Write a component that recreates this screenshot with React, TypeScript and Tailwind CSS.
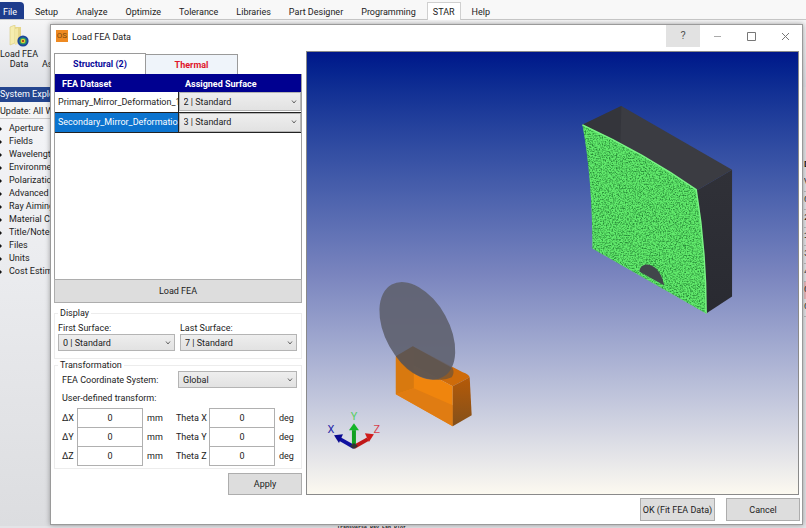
import { useState } from "react";
import type { ReactNode } from "react";

const menuItems = ["Setup", "Analyze", "Optimize", "Tolerance", "Libraries", "Part Designer", "Programming", "STAR", "Help"];

const explorerItems = [
  "Aperture",
  "Fields",
  "Wavelengths",
  "Environment",
  "Polarization",
  "Advanced",
  "Ray Aiming",
  "Material Catalogs",
  "Title/Notes",
  "Files",
  "Units",
  "Cost Estimator",
];

const surfaces = [0, 1, 2, 3, 4, 5, 6, 7].map((n) => `${n} | Standard`);

const datasets = [
  { name: "Primary_Mirror_Deformation_1", surface: "2 | Standard" },
  { name: "Secondary_Mirror_Deformation_1", surface: "3 | Standard" },
];

function Dropdown({ id, label, value, options, className }: { id?: string; label?: string; value: string; options: string[]; className: string }) {
  return (
    <div className={`grid items-center ${className}`}>
      <select
        id={id}
        aria-label={label}
        defaultValue={value}
        className="col-start-1 row-start-1 h-full w-full appearance-none border border-[#b4b4b4] bg-linear-to-b from-[#eeeeee] to-[#e2e2e2] px-1 text-[#222]"
      >
        {options.map((o) => (
          <option key={o}>{o}</option>
        ))}
      </select>
      <svg viewBox="0 0 6 4" className="pointer-events-none col-start-1 row-start-1 mr-1 h-1 w-1.5 justify-self-end" fill="none" stroke="#666">
        <path d="M1 .5 3 3 5 .5" />
      </svg>
    </div>
  );
}

function PushButton({ children, className }: { children: ReactNode; className: string }) {
  return <button className={`border border-[#adadad] bg-[#dddddd] text-center text-[#222] ${className}`}>{children}</button>;
}

function Offset({ axis, id, unit, className }: { axis: string; id: string; unit: string; className: string }) {
  return (
    <div className="flex items-center">
      <label htmlFor={id} className={className}>{axis}</label>
      <input id={id} defaultValue="0" className="-mb-px h-5 w-[66px] border border-[#b0b0b0] bg-white text-center" />
      <span className="ml-1 w-4">{unit}</span>
    </div>
  );
}

function FolderIcon() {
  return (
    <svg viewBox="0 0 20 22" className="h-[22px] w-5">
      <path d="M1 2 6 0v18l-5 2z" fill="#f6edb0" stroke="#d8ca7a" strokeWidth=".6" />
      <path d="M6 2h6v16H6z" fill="#e6d68a" />
      <path d="m6 4 3-1v16l-3 1z" fill="#f3e8a6" />
      <circle cx="14" cy="16" r="5.6" fill="#1c479c" />
      <circle cx="14" cy="16" r="3.6" fill="#2f9d63" />
      <circle cx="14" cy="16" r="2.3" fill="#e5ce3a" />
      <circle cx="14" cy="16" r="1.1" fill="#a0331f" />
    </svg>
  );
}

function Viewport() {
  return (
    <svg viewBox="307 52 492 443" className="h-full w-full" role="img" aria-label="3D layout">
      <defs>
        <filter id="mesh" x="0" y="0" width="100%" height="100%" colorInterpolationFilters="sRGB">
          <feTurbulence type="fractalNoise" baseFrequency="0.7" numOctaves="3" seed="4" />
          <feColorMatrix values="0 0 0 0 0.16  0 0 0 0 0.55  0 0 0 0 0.22  0 2.6 0 0 -1.05" />
          <feComposite in2="SourceGraphic" operator="in" result="grain" />
          <feMerge>
            <feMergeNode in="SourceGraphic" />
            <feMergeNode in="grain" />
          </feMerge>
        </filter>
        <linearGradient id="side" x1="0" y1="0" x2="0" y2="1">
          <stop offset="0" stopColor="#303138" />
          <stop offset="1" stopColor="#292a31" />
        </linearGradient>
        <linearGradient id="orangeSide" x1="0" y1="0" x2="0" y2="1">
          <stop offset="0" stopColor="#b55a08" />
          <stop offset="1" stopColor="#84501a" />
        </linearGradient>
      </defs>

      {/* primary mirror */}
      <path d="M583 125 622 106 733 170 697 191z" fill="#3b3c42" />
      <path d="m622 106-1 40-38-21z" fill="#34353b" />
      <path d="m697 191 36-21v127l-26 17z" fill="url(#side)" />
      <path d="M583 125Q646 154 697 190Q707 250 707 314L593 249Q593 180 583 125" fill="#62ea6c" filter="url(#mesh)" />
      <path d="M583 125Q646 154 697 190Q707 250 707 314" fill="none" stroke="#7af584" strokeWidth="1.5" />
      <path d="M640 272c1-11 20-11 25 14z" fill="#41464b" />

      {/* secondary mirror */}
      <path d="m396 357 17-10 50 26q6 2 7 5l-17 9z" fill="#ce6b0a" />
      <path d="m396 357 57 30v40l-57-32z" fill="#f0850d" />
      <path d="m396 357 18-9v41l-18 6z" fill="#d8790f" />
      <path d="m396 395 18-6 39 17v21z" fill="#e07c12" />
      <path d="m453 387 17-9 2 38-19 11z" fill="url(#orangeSide)" />
      <ellipse cx="417.5" cy="331.5" rx="53" ry="32" transform="rotate(61 417.5 331.5)" fill="#5f6270" fillOpacity=".92" />
      <path d="m396 357 17-10 40 22q2 5-1 9-12 6-32-1-13-4-24-20" fill="#5e4f40" fillOpacity=".6" />

      {/* axis triad */}
      <g strokeWidth="4">
        <path d="m354 448-14-8" stroke="#1010a0" />
        <path d="m354 448 14-8" stroke="#c01818" />
        <path d="M354 448v-17" stroke="#12a022" />
      </g>
      <path d="m334 436 9-1-4 9z" fill="#0a0a90" />
      <path d="m374 435-9-1 4 9z" fill="#d01c1c" />
      <path d="m354 424-5 7h10z" fill="#14b428" />
      <path d="m350 447 4 3 4-3-4-3z" fill="#333" />
      <g className="text-[11px]" textAnchor="middle">
        <text x="331" y="434" fill="#2a2aa8">X</text>
        <text x="354" y="421" fill="#56cf62">Y</text>
        <text x="377" y="434" fill="#d8404c">Z</text>
      </g>
    </svg>
  );
}

export default function App() {
  const [selected, setSelected] = useState(1);

  return (
    <div className="relative flex h-screen flex-col overflow-hidden bg-[#e3e4e7] font-[Roboto,'Noto_Sans',sans-serif] text-[9px] leading-3 text-[#222]">
      <nav className="flex h-5 shrink-0 items-end border-b border-[#c8c8c8] bg-[#f8f8f8] whitespace-nowrap">
        <button className="mr-0.5 h-[17px] w-6 rounded-tr-sm bg-[#1e3c8c] pt-0.5 pr-1 text-white">File</button>
        {menuItems.map((m) => (
          <button key={m} className={m === "STAR" ? "mx-0.5 -mb-px h-[18px] border border-b-0 border-[#d0d0d0] bg-white px-[5px] pt-px" : "h-[17px] px-[9px] pt-0.5"}>
            {m}
          </button>
        ))}
      </nav>

      <div className="flex h-[67px] shrink-0 items-start justify-between bg-linear-to-b from-[#f5f5f6] to-[#dfe1e6] pt-[5px]">
        <button className="flex w-[38px] flex-col items-center leading-[10px]">
          <FolderIcon />
          <span className="mt-0.5 block whitespace-nowrap">Load FEA</span>
          <span className="block">Data</span>
        </button>
        <span className="mt-[33px] mr-auto ml-1">Assign</span>
      </div>

      <div className="flex min-h-0 flex-1 justify-between">
        <aside className="w-40 bg-linear-to-b from-[#f5f6f9] to-[#dcdde0] whitespace-nowrap">
          <h2 className="h-[15px] bg-[#24458f] leading-[15px] text-white">System Explorer</h2>
          <p className="mb-[3px] h-[17px] border-b border-[#c9c9c9] bg-[#f5f5f5] leading-[18px]">Update: All Windows</p>
          <ul className="leading-[13px]">
            {explorerItems.map((item) => (
              <li key={item} className="flex items-center gap-[7px]">
                <svg viewBox="0 0 2 4" className="h-1 w-0.5"><path d="m0 0 2 2-2 2z" fill="#111" /></svg>
                {item}
              </li>
            ))}
          </ul>
        </aside>
        <div className="flex w-0.5 flex-col overflow-hidden pt-[70px] font-['Liberation_Mono',monospace] leading-[17px]">
          {["D", "V", "0", "2", "1", "3", "4", "0", "0"].map((c, i) => (
            <span key={i} className={i === 7 ? "bg-[#e8b8bc]" : i === 0 ? "font-bold" : "border-b border-[#bbb]"}>{c}</span>
          ))}
        </div>
      </div>
      <p className="h-0.5 shrink-0 overflow-hidden pl-[337px] font-['Liberation_Mono',monospace] text-[5px] leading-[4px] font-bold">Transverse Ray Fan Plot</p>

      {/* dialog window floating over the application */}
      <section
        role="dialog"
        aria-label="Load FEA Data"
        className="absolute top-6 right-[3px] bottom-[3px] left-[50px] flex flex-col border border-[#9a9a9a] bg-white shadow-[0_0_5px_rgba(0,0,0,0.35)]"
      >
        <header className="flex h-[26px] shrink-0 items-start">
          <span className="mt-[5px] ml-[5px] flex size-3 items-center justify-center bg-[#ee8a22] text-[8px] text-[#7a4a10]">OS</span>
          <h1 className="mt-1.5 ml-1 flex-1">Load FEA Data</h1>
          <button aria-label="Help" className="h-[22px] w-[34px] bg-[#e2e2e2] text-[11px] text-[#555]">?</button>
          {[
            ["Minimize", "M1 4.5h7"],
            ["Maximize", "M.5.5h8v8h-8z"],
            ["Close", "m1 1 7 7m0-7L1 8"],
          ].map(([name, d]) => (
            <button key={name} aria-label={name} className="flex h-[22px] w-[34px] items-center justify-center">
              <svg viewBox="0 0 9 9" className="size-[9px]" fill="none" stroke={name === "Minimize" ? "#aaa" : "#777"}><path d={d} /></svg>
            </button>
          ))}
        </header>

        <div className="flex min-h-0 flex-1 gap-1 pr-[3px] pl-[3px]">
          <div className="flex w-[248px] shrink-0 flex-col">
            <div role="tablist" className="mt-0.5 flex h-[21px] shrink-0 items-end font-bold">
              <button role="tab" aria-selected="true" className="h-[21px] w-[92px] border border-b-0 border-[#9a9a9a] text-[#0a0a9a]">Structural (2)</button>
              <button role="tab" aria-selected="false" className="h-5 w-[92px] border border-b-0 border-l-0 border-[#9a9a9a] bg-[#eff4fa] text-[#e0162b]">Thermal</button>
            </div>

            <div className="h-[205px] shrink-0 border-x border-[#a0a0a0]">
              <table className="w-full table-fixed border-collapse">
                <thead>
                  <tr className="h-[18px] bg-[#000090] text-left text-white">
                    <th className="px-[7px] pt-0.5 pb-0">FEA Dataset</th>
                    <th className="px-[7px] pt-0.5 pb-0">Assigned Surface</th>
                  </tr>
                </thead>
                <tbody>
                  {datasets.map((d, i) => (
                    <tr key={d.name} onClick={() => setSelected(i)} className={`h-5 border-b border-[#222] ${i === selected ? "bg-[#0c74cf] text-white" : ""}`}>
                      <td className="overflow-hidden border-r border-[#222] py-0 pr-0 pl-[3px] whitespace-nowrap">{d.name}</td>
                      <td className="p-0">
                        <Dropdown label={`Surface for ${d.name}`} value={d.surface} options={surfaces} className="h-[19px]" />
                      </td>
                    </tr>
                  ))}
                </tbody>
              </table>
            </div>
            <PushButton className="h-6 shrink-0">Load FEA</PushButton>

            <fieldset className="mt-1 border border-[#ececec] px-[3px] pb-[7px]">
              <legend className="px-0.5">Display</legend>
              <div className="mt-[3px] flex gap-[5px]">
                <div className="w-[117px]">
                  <label htmlFor="first">First Surface:</label>
                  <Dropdown id="first" value="0 | Standard" options={surfaces} className="h-[17px]" />
                </div>
                <div className="w-[117px]">
                  <label htmlFor="last">Last Surface:</label>
                  <Dropdown id="last" value="7 | Standard" options={surfaces} className="h-[17px]" />
                </div>
              </div>
            </fieldset>

            <fieldset className="border border-[#ececec] px-[3px] pb-[3px]">
              <legend className="px-0.5">Transformation</legend>
              <div className="flex items-center pl-1">
                <label htmlFor="system" className="w-[116px]">FEA Coordinate System:</label>
                <Dropdown id="system" value="Global" options={["Global", "Local"]} className="h-[17px] w-[119px]" />
              </div>
              <p className="my-1 pl-1">User-defined transform:</p>
              {["X", "Y", "Z"].map((a) => (
                <div key={a} className="flex h-[19px] items-center justify-between pr-[3px] pl-1">
                  <Offset axis={`Δ${a}`} id={`d${a}`} unit="mm" className="w-[15px]" />
                  <Offset axis={`Theta ${a}`} id={`t${a}`} unit="deg" className="w-[33px]" />
                </div>
              ))}
            </fieldset>
            <PushButton className="mt-1 h-[23px] w-[74px] self-end">Apply</PushButton>
          </div>

          <div className="min-w-0 flex-1 border border-[#8a8a8a] bg-linear-to-b from-[#00168a] via-[#7984be] to-[#fcf9f0]">
            <Viewport />
          </div>
        </div>

        <footer className="flex h-[29px] shrink-0 items-center justify-end gap-[11px] pr-0.5">
          <PushButton className="h-[23px] w-[75px] whitespace-nowrap">OK (Fit FEA Data)</PushButton>
          <PushButton className="h-[23px] w-[74px]">Cancel</PushButton>
        </footer>
      </section>
    </div>
  );
}
